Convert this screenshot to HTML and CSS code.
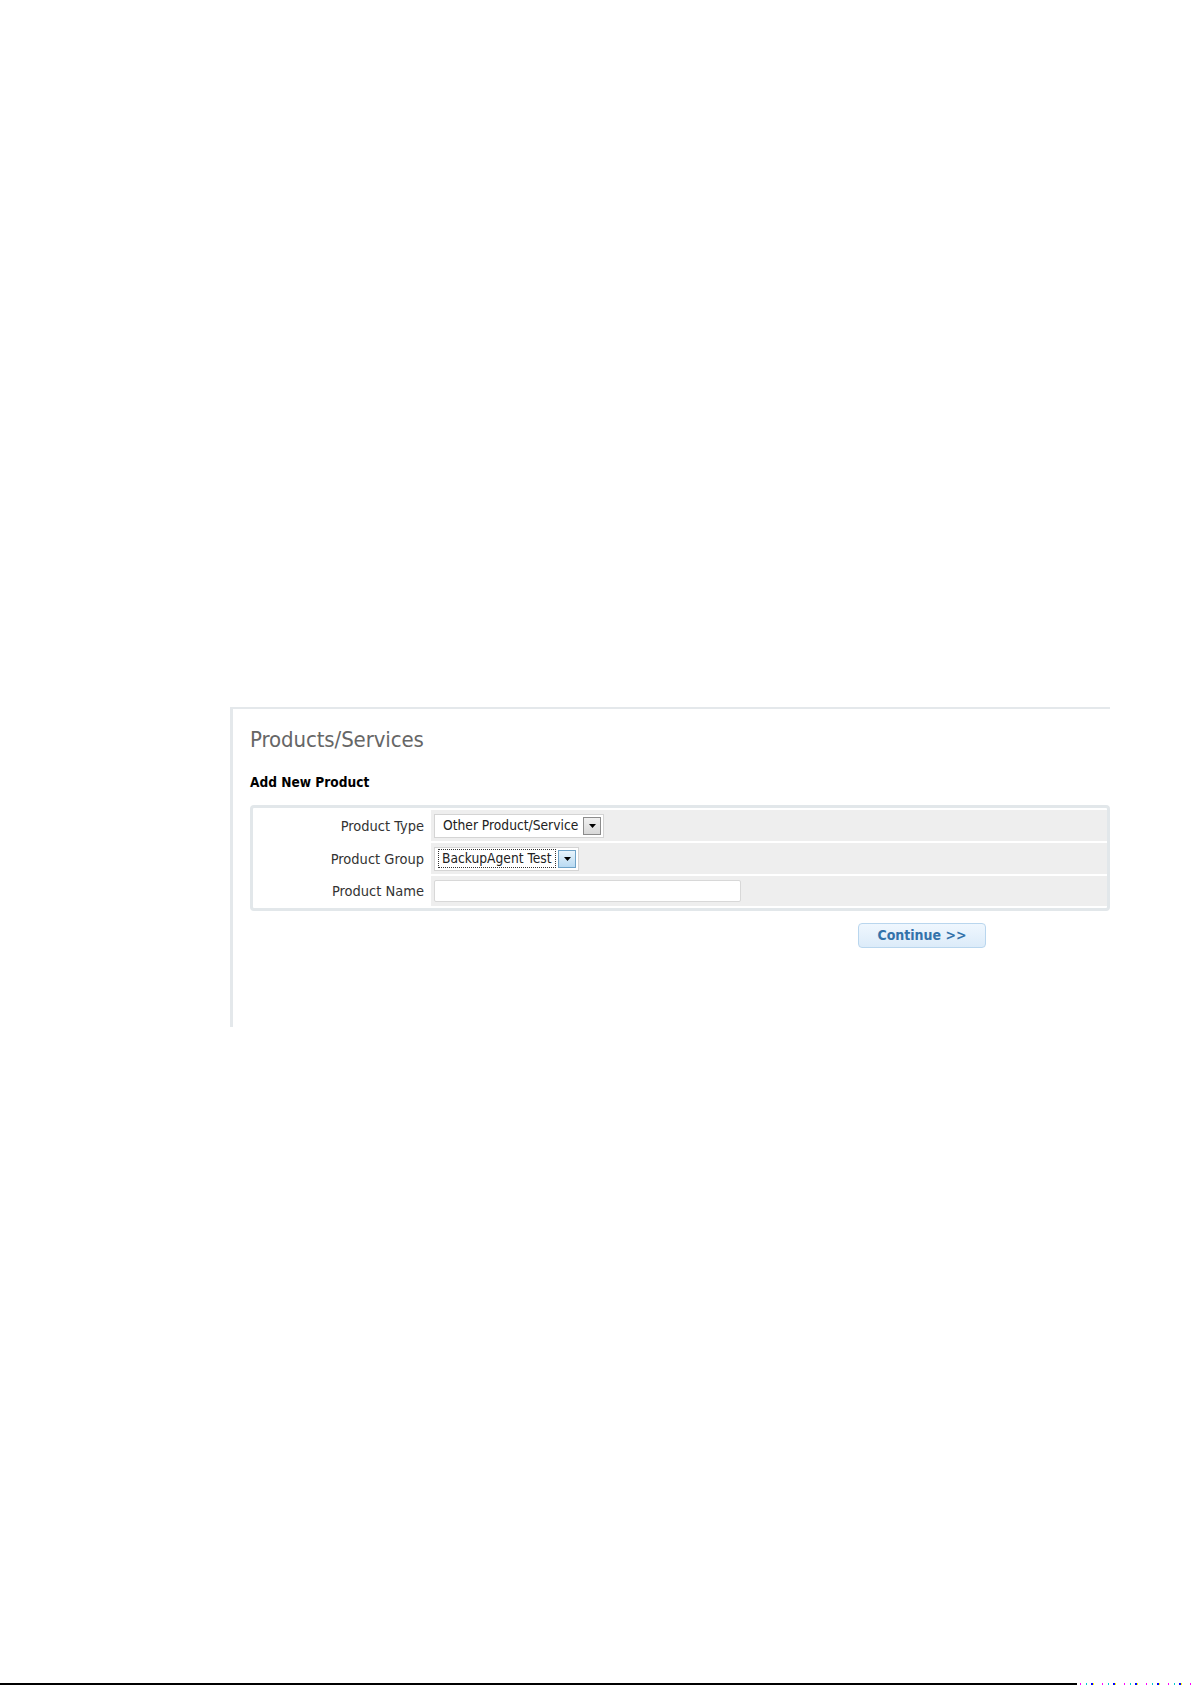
FILE: index.html
```html
<!DOCTYPE html>
<html>
<head>
<meta charset="utf-8">
<link rel="stylesheet" href="styles.css">
</head>
<body>
<div class="page">
  <div class="panel">
    <h1 class="title">Products/Services</h1>
    <h2 class="subtitle">Add New Product</h2>
    <div class="formbox">
      <table class="form">
        <tr>
          <td class="label">Product Type</td>
          <td class="field">
            <span class="select">
              <span class="select-text">Other Product/Service</span>
              <span class="select-btn"><svg width="7" height="4" viewBox="0 0 7 4"><path d="M0 0H7L3.5 4Z" fill="#000"/></svg></span>
            </span>
          </td>
        </tr>
        <tr>
          <td class="label">Product Group</td>
          <td class="field">
            <span class="select">
              <span class="select-text focused">BackupAgent Test</span>
              <span class="select-btn blue"><svg width="7" height="4" viewBox="0 0 7 4"><path d="M0 0H7L3.5 4Z" fill="#000"/></svg></span>
            </span>
          </td>
        </tr>
        <tr>
          <td class="label">Product Name</td>
          <td class="field"><span class="input"></span></td>
        </tr>
      </table>
    </div>
    <div class="actions">
      <span class="button">Continue &gt;&gt;</span>
    </div>
  </div>
</div>
<div class="bottomline">
  <span class="black"></span>
  <span class="noise"></span>
</div>
</body>
</html>
```

FILE: styles.css
```css
html, body {
  margin: 0;
  padding: 0;
  background: #fff;
}
body {
  width: 1192px;
  height: 1685px;
  position: relative;
  font-family: "DejaVu Sans Condensed", "DejaVu Sans", sans-serif;
  font-size: 13px;
  color: #222;
}
.page {
  padding-top: 707px;
  padding-left: 230px;
}
.panel {
  width: 860px;
  height: 318px;
  border-left: 3px solid #e4e8eb;
  border-top: 2px solid #e4e8eb;
  padding-left: 17px;
  box-sizing: content-box;
}
.title {
  margin: 0;
  padding-top: 17px;
  font-weight: normal;
  font-size: 22px;
  line-height: 28px;
  color: #666;
  letter-spacing: -0.1px;
}
.subtitle {
  margin: 0;
  padding-top: 20px;
  font-size: 13.6px;
  line-height: 16px;
  font-weight: bold;
  color: #000;
}
.formbox {
  margin-top: 15px;
  width: 854px;
  border: 3px solid #e2e7ea;
  border-radius: 4px;
  padding: 0;
}
.form {
  width: 100%;
  border-collapse: separate;
  border-spacing: 0 2px;
  padding: 0;
}
.form td {
  height: 31px;
  padding: 0;
}
.form tr:nth-child(3) td { height: 30px; }
.label {
  width: 171px;
  text-align: right;
  padding-right: 7px !important;
  background: #fff;
  color: #333;
  white-space: nowrap;
  font-size: 14.5px;
}
.field {
  background: #eeeeee;
  padding-left: 3px !important;
  vertical-align: middle;
}
.select {
  display: inline-flex;
  align-items: center;
  height: 22px;
  border: 1px solid #d4d4d4;
  background: #fff;
  padding: 0 2px 0 3px;
  vertical-align: middle;
  font-size: 13.7px;
}
.select-text {
  padding: 0 4px 0 4px;
  line-height: 17px;
  white-space: nowrap;
  border: 1px solid transparent;
}
.select-text.focused {
  border: 1px dotted #333;
  padding: 0 4px 0 3px;
  margin-right: 2px;
}
.select-btn {
  width: 16px;
  height: 16px;
  border: 1px solid #8c8c8c;
  background: linear-gradient(#f0f0f0, #d8d8d8);
  display: flex;
  align-items: center;
  justify-content: center;
}
.select-btn.blue {
  border-color: #6fa3c8;
  background: linear-gradient(#e8f4fc, #b9daf2);
}
.input {
  display: inline-block;
  width: 305px;
  height: 20px;
  border: 1px solid #d8d8d8;
  border-radius: 2px;
  background: #fff;
  vertical-align: middle;
}
.actions {
  padding-top: 12px;
  padding-left: 608px;
}
.button {
  display: inline-block;
  width: 126px;
  height: 23px;
  line-height: 23px;
  text-align: center;
  border: 1px solid #b9d6ee;
  border-radius: 4px;
  background: linear-gradient(#eff7fe, #dcebf9);
  color: #3372aa;
  font-weight: bold;
  font-size: 14px;
}
.bottomline {
  position: absolute;
  left: 0;
  bottom: 0;
  width: 1192px;
  height: 2px;
  display: flex;
}
.black {
  width: 1077px;
  background: #000;
}
.noise {
  flex: 1;
  background: repeating-linear-gradient(90deg, #fff 0 3px, #f0f 3px 4px, #fff 4px 9px, #0cc 9px 10px, #fff 10px 14px, #00f 14px 16px, #ff0 16px 17px, #fff 17px 22px);
}
```
